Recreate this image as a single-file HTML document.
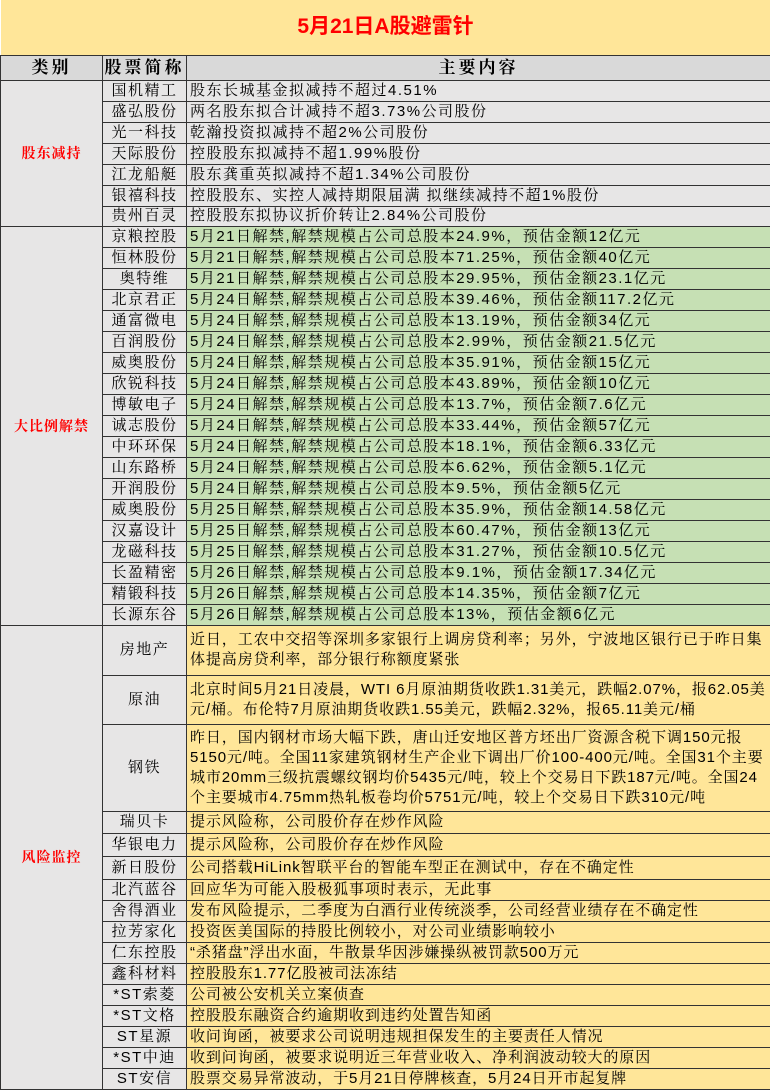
<!DOCTYPE html>
<html><head><meta charset="utf-8"><style>
body{margin:0;width:770px;height:1091px;background:#fff;overflow:hidden;font-family:"Liberation Sans","Noto Serif CJK SC",serif;}
table{border-collapse:collapse;table-layout:fixed;width:770px;position:absolute;top:0;left:0}
td{border:1px solid #333;padding:0;font-size:15px;letter-spacing:1.5px;line-height:18px;white-space:nowrap;overflow:hidden;color:#000}
.t{background:#FFE699;color:#f00;font-weight:bold;font-size:21px;letter-spacing:0;text-align:center;font-family:"Liberation Sans","Noto Sans CJK SC",sans-serif;border-top:none;border-left:none;border-right:none}
.h td{background:#D9D9D9;font-weight:bold;font-size:17px;letter-spacing:3px;text-align:center}
.c{background:#E7E6E6;color:#f00;font-weight:bold;text-align:center;font-size:14px;letter-spacing:1px}
.n{background:#E7E6E6;text-align:center}
.g{background:#E7E6E6;padding-left:3px}
.gr{background:#C6E0B4;padding-left:3px}
.y{background:#FFE699;padding-left:3px;white-space:normal;line-height:20px;letter-spacing:0.9px}
</style></head><body>
<table>
<colgroup><col style="width:102px"><col style="width:84px"><col style="width:584px"></colgroup>
<tr style="height:55px"><td class="t" colspan="3">5月21日A股避雷针</td></tr>
<tr class="h" style="height:25px"><td>类别</td><td>股票简称</td><td>主要内容</td></tr>
<tr style="height:21px"><td class="c" rowspan="7">股东减持</td><td class="n">国机精工</td><td class="g">股东长城基金拟减持不超过4.51%</td></tr>
<tr style="height:21px"><td class="n">盛弘股份</td><td class="g">两名股东拟合计减持不超3.73%公司股份</td></tr>
<tr style="height:21px"><td class="n">光一科技</td><td class="g">乾瀚投资拟减持不超2%公司股份</td></tr>
<tr style="height:21px"><td class="n">天际股份</td><td class="g">控股股东拟减持不超1.99%股份</td></tr>
<tr style="height:21px"><td class="n">江龙船艇</td><td class="g">股东龚重英拟减持不超1.34%公司股份</td></tr>
<tr style="height:21px"><td class="n">银禧科技</td><td class="g">控股股东、实控人减持期限届满 拟继续减持不超1%股份</td></tr>
<tr style="height:20px"><td class="n">贵州百灵</td><td class="g">控股股东拟协议折价转让2.84%公司股份</td></tr>
<tr style="height:21px"><td class="c" rowspan="19">大比例解禁</td><td class="n">京粮控股</td><td class="gr">5月21日解禁,解禁规模占公司总股本24.9%，预估金额12亿元</td></tr>
<tr style="height:21px"><td class="n">恒林股份</td><td class="gr">5月21日解禁,解禁规模占公司总股本71.25%，预估金额40亿元</td></tr>
<tr style="height:21px"><td class="n">奥特维</td><td class="gr">5月21日解禁,解禁规模占公司总股本29.95%，预估金额23.1亿元</td></tr>
<tr style="height:21px"><td class="n">北京君正</td><td class="gr">5月24日解禁,解禁规模占公司总股本39.46%，预估金额117.2亿元</td></tr>
<tr style="height:21px"><td class="n">通富微电</td><td class="gr">5月24日解禁,解禁规模占公司总股本13.19%，预估金额34亿元</td></tr>
<tr style="height:21px"><td class="n">百润股份</td><td class="gr">5月24日解禁,解禁规模占公司总股本2.99%，预估金额21.5亿元</td></tr>
<tr style="height:21px"><td class="n">威奥股份</td><td class="gr">5月24日解禁,解禁规模占公司总股本35.91%，预估金额15亿元</td></tr>
<tr style="height:21px"><td class="n">欣锐科技</td><td class="gr">5月24日解禁,解禁规模占公司总股本43.89%，预估金额10亿元</td></tr>
<tr style="height:21px"><td class="n">博敏电子</td><td class="gr">5月24日解禁,解禁规模占公司总股本13.7%，预估金额7.6亿元</td></tr>
<tr style="height:21px"><td class="n">诚志股份</td><td class="gr">5月24日解禁,解禁规模占公司总股本33.44%，预估金额57亿元</td></tr>
<tr style="height:21px"><td class="n">中环环保</td><td class="gr">5月24日解禁,解禁规模占公司总股本18.1%，预估金额6.33亿元</td></tr>
<tr style="height:21px"><td class="n">山东路桥</td><td class="gr">5月24日解禁,解禁规模占公司总股本6.62%，预估金额5.1亿元</td></tr>
<tr style="height:21px"><td class="n">开润股份</td><td class="gr">5月24日解禁,解禁规模占公司总股本9.5%，预估金额5亿元</td></tr>
<tr style="height:21px"><td class="n">威奥股份</td><td class="gr">5月25日解禁,解禁规模占公司总股本35.9%，预估金额14.58亿元</td></tr>
<tr style="height:21px"><td class="n">汉嘉设计</td><td class="gr">5月25日解禁,解禁规模占公司总股本60.47%，预估金额13亿元</td></tr>
<tr style="height:21px"><td class="n">龙磁科技</td><td class="gr">5月25日解禁,解禁规模占公司总股本31.27%，预估金额10.5亿元</td></tr>
<tr style="height:21px"><td class="n">长盈精密</td><td class="gr">5月26日解禁,解禁规模占公司总股本9.1%，预估金额17.34亿元</td></tr>
<tr style="height:21px"><td class="n">精锻科技</td><td class="gr">5月26日解禁,解禁规模占公司总股本14.35%，预估金额7亿元</td></tr>
<tr style="height:21px"><td class="n">长源东谷</td><td class="gr">5月26日解禁,解禁规模占公司总股本13%，预估金额6亿元</td></tr>
<tr style="height:50px"><td class="c" rowspan="17">风险监控</td><td class="n">房地产</td><td class="y">近日，工农中交招等深圳多家银行上调房贷利率；另外，宁波地区银行已于昨日集体提高房贷利率，部分银行称额度紧张</td></tr>
<tr style="height:49px"><td class="n">原油</td><td class="y">北京时间5月21日凌晨，WTI 6月原油期货收跌1.31美元，跌幅2.07%，报62.05美元/桶。布伦特7月原油期货收跌1.55美元，跌幅2.32%，报65.11美元/桶</td></tr>
<tr style="height:87px"><td class="n">钢铁</td><td class="y">昨日，国内钢材市场大幅下跌，唐山迁安地区普方坯出厂资源含税下调150元报5150元/吨。全国11家建筑钢材生产企业下调出厂价100-400元/吨。全国31个主要城市20mm三级抗震螺纹钢均价5435元/吨，较上个交易日下跌187元/吨。全国24个主要城市4.75mm热轧板卷均价5751元/吨，较上个交易日下跌310元/吨</td></tr>
<tr style="height:22px"><td class="n">瑞贝卡</td><td class="y">提示风险称，公司股价存在炒作风险</td></tr>
<tr style="height:23px"><td class="n">华银电力</td><td class="y">提示风险称，公司股价存在炒作风险</td></tr>
<tr style="height:23px"><td class="n">新日股份</td><td class="y">公司搭载HiLink智联平台的智能车型正在测试中，存在不确定性</td></tr>
<tr style="height:21px"><td class="n">北汽蓝谷</td><td class="y">回应华为可能入股极狐事项时表示，无此事</td></tr>
<tr style="height:21px"><td class="n">舍得酒业</td><td class="y">发布风险提示，二季度为白酒行业传统淡季，公司经营业绩存在不确定性</td></tr>
<tr style="height:21px"><td class="n">拉芳家化</td><td class="y">投资医美国际的持股比例较小，对公司业绩影响较小</td></tr>
<tr style="height:21px"><td class="n">仁东控股</td><td class="y">“杀猪盘”浮出水面，牛散景华因涉嫌操纵被罚款500万元</td></tr>
<tr style="height:21px"><td class="n">鑫科材料</td><td class="y">控股股东1.77亿股被司法冻结</td></tr>
<tr style="height:20px"><td class="n">*ST索菱</td><td class="y">公司被公安机关立案侦查</td></tr>
<tr style="height:20px"><td class="n">*ST文格</td><td class="y">控股股东融资合约逾期收到违约处置告知函</td></tr>
<tr style="height:21px"><td class="n">ST星源</td><td class="y">收问询函，被要求公司说明违规担保发生的主要责任人情况</td></tr>
<tr style="height:20px"><td class="n">*ST中迪</td><td class="y">收到问询函，被要求说明近三年营业收入、净利润波动较大的原因</td></tr>
<tr style="height:20px"><td class="n">ST安信</td><td class="y">股票交易异常波动，于5月21日停牌核查，5月24日开市起复牌</td></tr>
</table>
</body></html>
